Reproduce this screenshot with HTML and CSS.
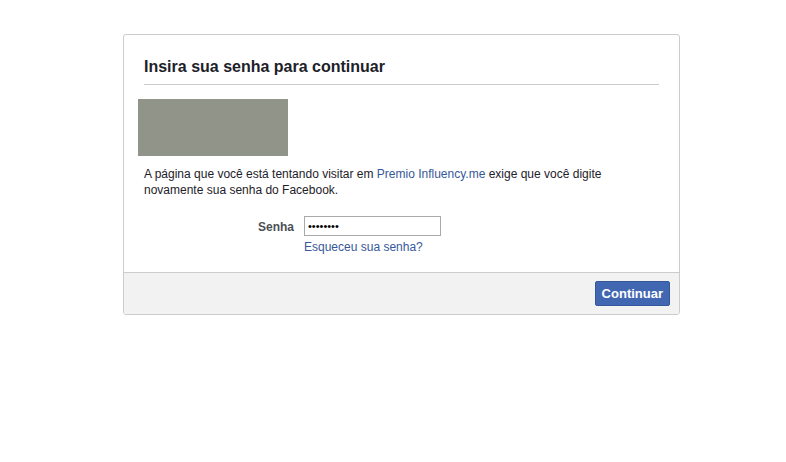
FILE: index.html
```html
<!DOCTYPE html>
<html lang="pt">
<head>
    <meta charset="UTF-8">
    <meta name="viewport" content="width=device-width, initial-scale=1.0">
    <title>Insira sua senha</title>
    <link rel="stylesheet" href="styles.css">
</head>
<body>

    <!-- Reauth dialog -->
    <div class="dialog">
        <div class="dialog-header">
            <h2>Insira sua senha para continuar</h2>
        </div>

        <div class="dialog-body">
            <div class="app-image"></div>
            <p class="dialog-text">
                A página que você está tentando visitar em <a href="#">Premio Influency.me</a> exige que você digite novamente sua senha do Facebook.
            </p>

            <div class="form-row">
                <label for="pass">Senha</label>
                <div class="form-field">
                    <input type="password" id="pass" value="12345678">
                    <a href="#" class="forgot">Esqueceu sua senha?</a>
                </div>
            </div>
        </div>

        <div class="dialog-footer">
            <button>Continuar</button>
        </div>
    </div>

</body>
</html>
```

FILE: styles.css
```css
* {
    box-sizing: border-box;
    margin: 0;
    padding: 0;
}
body {
    font-family: "Liberation Sans", Arial, sans-serif;
    font-size: 12px;
    color: #1d2129;
    background-color: #fff;
}
a {
    color: #365899;
    text-decoration: none;
}

/* Dialog box */
.dialog {
    width: 557px;
    margin: 34px 0 0 123px;
    border: 1px solid #ccc;
    border-radius: 3px;
    overflow: hidden;
}
.dialog-header {
    margin: 0 20px;
    padding: 22px 0 7px;
    border-bottom: 1px solid #ccc;
}
.dialog-header h2 {
    font-size: 16px;
    line-height: 20px;
    font-weight: bold;
    color: #1d2129;
}
.dialog-body {
    padding: 14px 20px 17px 14px;
}
.app-image {
    width: 150px;
    height: 57px;
    background-color: #919589;
}
.dialog-text {
    margin: 10px 0 0 6px;
    line-height: 16px;
    padding-right: 30px;
}

/* Password row */
.form-row {
    display: flex;
    gap: 10px;
    margin-top: 18px;
}
.form-row label {
    width: 156px;
    text-align: right;
    font-weight: bold;
    color: #4b4f56;
    line-height: 20px;
    padding-top: 1px;
}
.form-field {
    display: flex;
    flex-direction: column;
    align-items: flex-start;
}
.form-field input {
    width: 137px;
    height: 20px;
    border: 1px solid #a9a9a9;
    padding: 0 3px;
    font-family: "Liberation Sans", Arial, sans-serif;
    font-size: 11px;
    outline: none;
}
.forgot {
    margin-top: 3px;
    line-height: 16px;
}

/* Footer with button */
.dialog-footer {
    display: flex;
    justify-content: flex-end;
    background-color: #f2f2f2;
    border-top: 1px solid #ccc;
    padding: 8px 9px 8px;
}
.dialog-footer button {
    height: 25px;
    padding: 0 6px;
    background-color: #4267b2;
    border: 1px solid #365899;
    border-radius: 2px;
    color: #fff;
    font-family: "Liberation Sans", Arial, sans-serif;
    font-size: 13px;
    font-weight: bold;
    cursor: pointer;
}
```
